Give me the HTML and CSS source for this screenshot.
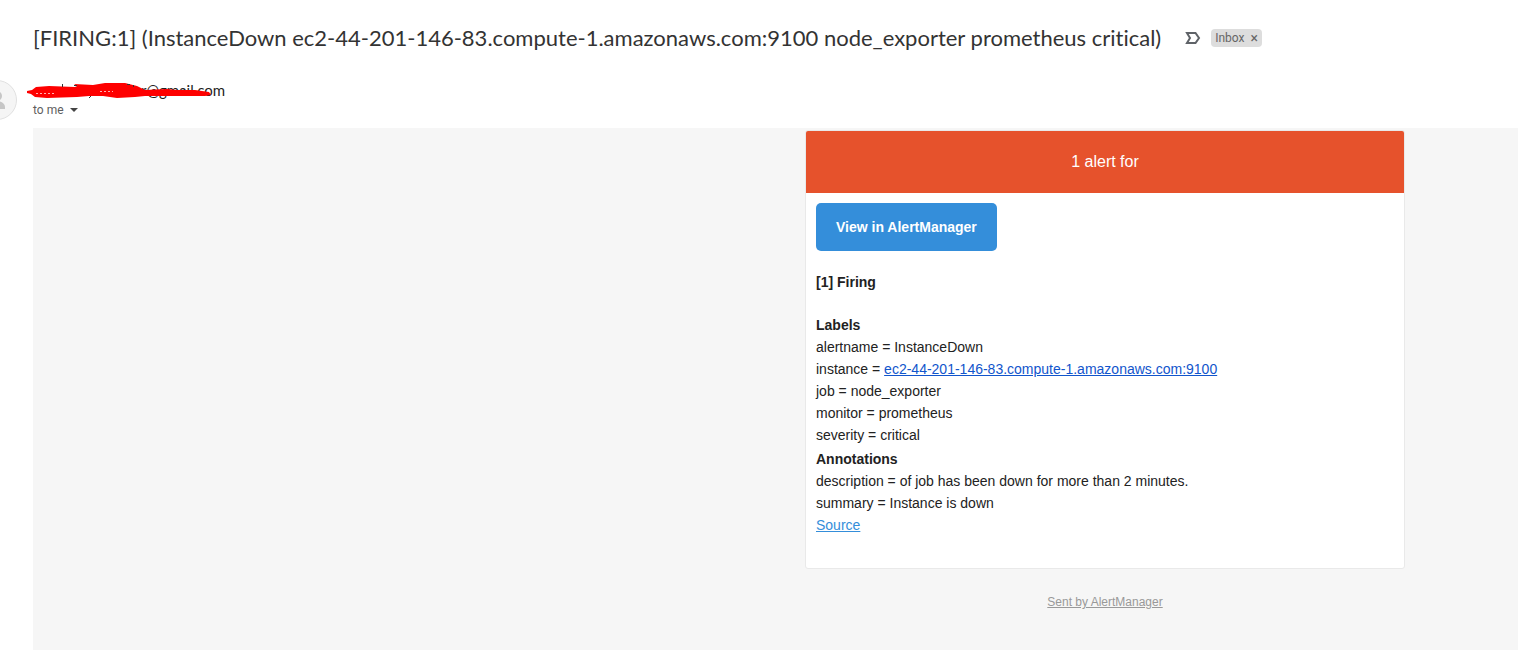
FILE: index.html
```html
<!DOCTYPE html>
<html lang="en">
<head>
<meta charset="utf-8">
<meta name="viewport" content="width=device-width, initial-scale=1">
<title>InstanceDown alert</title>
<link rel="stylesheet" href="styles.css">
</head>
<body>
<main class="mail">
  <header class="subject">
    <h1 class="subject-text">[FIRING:1] (InstanceDown ec2-44-201-146-83.compute-1.amazonaws.com:9100 node_exporter prometheus critical)</h1>
    <button class="importance" type="button" aria-label="Mark as important">
      <svg width="16" height="12" viewBox="0 0 16 12" fill="none" stroke="#5f6368" stroke-width="2"><path d="M2 1H10.500L14 6L10.500 11H2L5 6Z"/></svg>
    </button>
    <span class="tag">Inbox <button class="tag-close" type="button" aria-label="Remove label">×</button></span>
  </header>
  <section class="sender">
    <svg class="avatar" width="40" height="40" viewBox="0 0 40 40"><circle cx="20" cy="20" r="19.500" fill="#f5f5f5" stroke="#e0e0e0"/><circle cx="20" cy="16" r="5" fill="#c6c6c6"/><path d="M10 29v-2c0-4 7-6 10-6s8 2 8 6v2z" fill="#c6c6c6"/></svg>
    <div class="sender-info">
      <div class="address">
        <span class="address-text">r@gmail.com</span>
        <svg class="scribble" width="190" height="20" viewBox="0 0 190 20">
          <path fill="#fe0000" d="M0 8L5 7L9 4L22 3L48 4L50 3L47 1L66 2L78 0L98 0L110 3L118 7L140 6L150 7L168 7L182 9L184 12L178 13L150 13L118 13L108 14L90 15L76 13L62 13L50 14L20 15L8 14L4 11L0 10Z"/>
          <path fill="none" stroke="#333" d="M35.500 1v3M47 2.500h3M64 13l-2 2M100 1.500h3M106.500 2v2"/>
          <path fill="none" stroke="#fff" stroke-opacity=".7" stroke-dasharray="2 2" d="M9 10.500h20M73 8.500h13"/>
        </svg>
      </div>
      <button class="recipient" type="button">to me <span class="caret"></span></button>
    </div>
  </section>
  <div class="message">
    <article class="alert">
      <h2 class="alert-head">1 alert for</h2>
      <div class="alert-body">
        <a class="view" href="#">View in AlertManager</a>
        <h3 class="firing">[1] Firing</h3>
        <div class="group">
          <strong>Labels</strong>
          <span>alertname = InstanceDown</span>
          <span>instance = <a class="host" href="#">ec2-44-201-146-83.compute-1.amazonaws.com:9100</a></span>
          <span>job = node_exporter</span>
          <span>monitor = prometheus</span>
          <span>severity = critical</span>
        </div>
        <div class="group">
          <strong>Annotations</strong>
          <span>description = of job has been down for more than 2 minutes.</span>
          <span>summary = Instance is down</span>
          <span><a class="source" href="#">Source</a></span>
        </div>
      </div>
    </article>
    <footer class="sent"><a href="#">Sent by AlertManager</a></footer>
  </div>
</main>
</body>
</html>
```
FILE: styles.css
```css
* { box-sizing: border-box; }
body { margin: 0; background: #fff; color: #222; font-family: "Liberation Sans", Arial, sans-serif; font-size: 14px; line-height: 22px; }
h1, h2, h3 { margin: 0; }
button { border: 0; padding: 0; background: none; font: inherit; color: inherit; cursor: pointer; }
.mail { display: flex; flex-direction: column; min-height: 100vh; padding-left: 33px; overflow-x: hidden; }
.subject { display: flex; align-items: center; padding-top: 24px; }
.subject-text { font-family: Lato, sans-serif; font-size: 22px; font-weight: 400; line-height: 28px; color: #333; font-variant-ligatures: none; }
.importance { display: flex; margin-left: 24px; }
.tag { display: flex; align-items: center; gap: 6px; margin-left: 10px; padding: 0 4px; border-radius: 4px; background: #ddd; color: #666; font-family: Roboto, sans-serif; font-size: 12px; line-height: 18px; }
.tag-close { font-size: 14px; line-height: 18px; }
.sender { display: flex; gap: 16px; margin: 28px 0 8px -56px; }
.avatar { flex: none; }
.address { position: relative; line-height: 20px; padding-left: 108px; font-family: Lato, sans-serif; font-size: 15px; color: #1f1f1f; }
.scribble { position: absolute; left: -6px; top: 3px; }
.recipient { display: flex; align-items: center; gap: 6px; font-family: Roboto, sans-serif; font-size: 12px; line-height: 20px; color: #5e5e5e; }
.caret { border: 4px solid transparent; border-top-color: #444; border-bottom: 0; }
.message { flex: 1; display: grid; grid-template-columns: 772fr 600px 113fr; align-content: start; padding: 2px 0 38px; background: #f6f6f6; }
.alert, .sent { grid-column: 2; }
.alert { border: 1px solid #e9e9e9; border-radius: 3px; background: #fff; overflow: hidden; }
.alert-head { padding: 20px; background: #e6522c; color: #fff; font-size: 16px; font-weight: 400; text-align: center; }
.alert-body { padding: 10px 10px 32px; }
.view { display: inline-block; padding: 13px 20px; border-radius: 5px; background: #348eda; color: #fff; font-weight: 700; text-decoration: none; vertical-align: top; }
.firing { margin: 20px 0 21px; font-size: 14px; }
.group { display: flex; flex-direction: column; }
.group + .group { margin-top: 2px; }
.host { color: #15c; }
.source { color: #348eda; }
.sent { padding-top: 22px; text-align: center; font-size: 12px; }
.sent a { color: #999; }
```
